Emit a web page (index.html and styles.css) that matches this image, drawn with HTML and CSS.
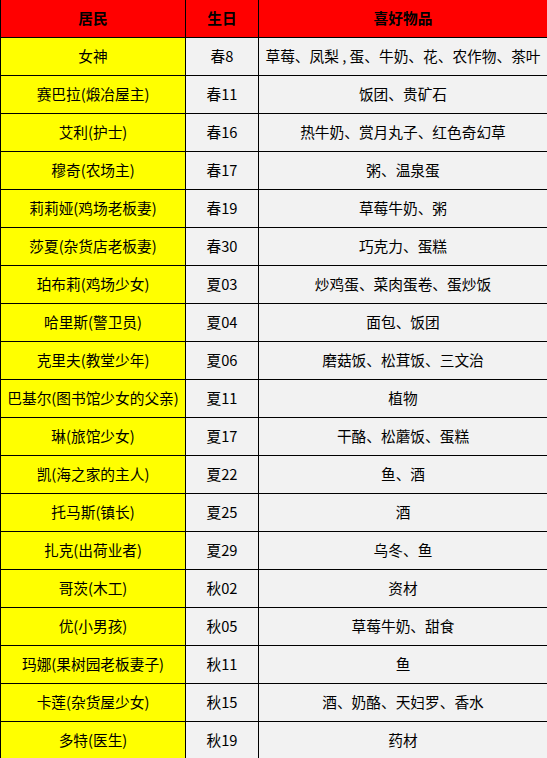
FILE: index.html
```html
<!DOCTYPE html>
<html lang="zh-CN">
<head>
<meta charset="utf-8">
<title>居民生日与喜好物品</title>
<link rel="stylesheet" href="styles.css">
</head>
<body>
<table class="sheet">
  <colgroup>
    <col class="c-name">
    <col class="c-day">
    <col class="c-gift">
  </colgroup>
  <thead>
    <tr><th>居民</th><th>生日</th><th>喜好物品</th></tr>
  </thead>
  <tbody>
    <tr><td class="name">女神</td><td>春8</td><td>草莓、凤梨 , 蛋、牛奶、花、农作物、茶叶</td></tr>
    <tr><td class="name">赛巴拉(煅冶屋主)</td><td>春11</td><td>饭团、贵矿石</td></tr>
    <tr><td class="name">艾利(护士)</td><td>春16</td><td>热牛奶、赏月丸子、红色奇幻草</td></tr>
    <tr><td class="name">穆奇(农场主)</td><td>春17</td><td>粥、温泉蛋</td></tr>
    <tr><td class="name">莉莉娅(鸡场老板妻)</td><td>春19</td><td>草莓牛奶、粥</td></tr>
    <tr><td class="name">莎夏(杂货店老板妻)</td><td>春30</td><td>巧克力、蛋糕</td></tr>
    <tr><td class="name">珀布莉(鸡场少女)</td><td>夏03</td><td>炒鸡蛋、菜肉蛋卷、蛋炒饭</td></tr>
    <tr><td class="name">哈里斯(警卫员)</td><td>夏04</td><td>面包、饭团</td></tr>
    <tr><td class="name">克里夫(教堂少年)</td><td>夏06</td><td>磨菇饭、松茸饭、三文治</td></tr>
    <tr><td class="name">巴基尔(图书馆少女的父亲)</td><td>夏11</td><td>植物</td></tr>
    <tr><td class="name">琳(旅馆少女)</td><td>夏17</td><td>干酪、松蘑饭、蛋糕</td></tr>
    <tr><td class="name">凯(海之家的主人)</td><td>夏22</td><td>鱼、酒</td></tr>
    <tr><td class="name">托马斯(镇长)</td><td>夏25</td><td>酒</td></tr>
    <tr><td class="name">扎克(出荷业者)</td><td>夏29</td><td>乌冬、鱼</td></tr>
    <tr><td class="name">哥茨(木工)</td><td>秋02</td><td>资材</td></tr>
    <tr><td class="name">优(小男孩)</td><td>秋05</td><td>草莓牛奶、甜食</td></tr>
    <tr><td class="name">玛娜(果树园老板妻子)</td><td>秋11</td><td>鱼</td></tr>
    <tr><td class="name">卡莲(杂货屋少女)</td><td>秋15</td><td>酒、奶酪、天妇罗、香水</td></tr>
    <tr><td class="name">多特(医生)</td><td>秋19</td><td>药材</td></tr>
  </tbody>
</table>
</body>
</html>
```
FILE: styles.css
```css
html, body {
  margin: 0;
  padding: 0;
  background: #ffffff;
}

.sheet {
  margin-top: -1px;
  border-collapse: separate;
  border-spacing: 1px;
  background: #000000;
  table-layout: fixed;
  width: 548px;
  font-family: "Noto Sans CJK SC", "Noto Sans", sans-serif;
  font-size: 14.7px;
  color: #000000;
}

.c-name { width: 184px; }
.c-day { width: 72px; }
.c-gift { width: 288px; }

.sheet th,
.sheet td {
  height: 37px;
  padding: 0;
  text-align: center;
  vertical-align: middle;
  white-space: nowrap;
  line-height: 1;
  overflow: hidden;
}

.sheet th {
  background: #ff0000;
  font-weight: bold;
}

.sheet td {
  background: #f2f2f2;
}

.sheet td.name {
  background: #ffff00;
}
```
